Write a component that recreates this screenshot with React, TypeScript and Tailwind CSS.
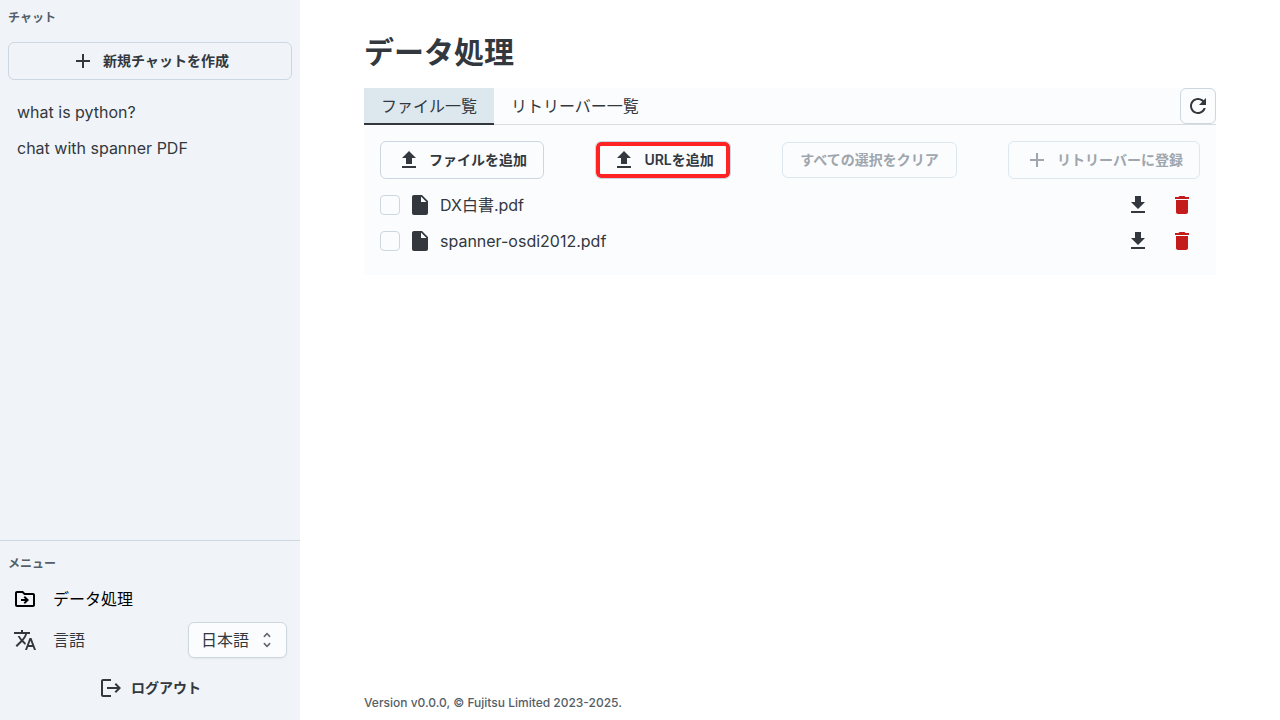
import React from "react";
import clsx from "clsx";

const ICONS = {
  add: "M19 13h-6v6h-2v-6H5v-2h6V5h2v6h6z",
  upload: "M5 20h14v-2H5zm0-10h4v6h6v-6h4l-7-7z",
  download: "M19 9h-4V3H9v6H5l7 7zM5 18v2h14v-2z",
  file: "M6 2c-1.1 0-1.99.9-1.99 2L4 20c0 1.1.89 2 1.99 2H18c1.1 0 2-.9 2-2V8l-6-6zm7 7V3.5L18.5 9z",
  trash: "M6 19c0 1.1.9 2 2 2h8c1.1 0 2-.9 2-2V7H6zM19 4h-3.5l-1-1h-5l-1 1H5v2h14z",
  refresh:
    "M17.65 6.35C16.2 4.9 14.21 4 12 4c-4.42 0-7.99 3.58-7.99 8s3.57 8 7.99 8c3.73 0 6.84-2.55 7.73-6h-2.08c-.82 2.33-3.04 4-5.65 4-3.31 0-6-2.69-6-6s2.69-6 6-6c1.66 0 3.14.69 4.22 1.78L13 11h7V4z",
  folderMove:
    "M20 6h-8l-2-2H4c-1.1 0-1.99.9-1.99 2L2 18c0 1.1.9 2 2 2h16c1.1 0 2-.9 2-2V8c0-1.1-.9-2-2-2m0 12H4V6h5.17l2 2H20zm-7.84-6H8v2h4.16l-1.59 1.59L11.99 17 16 13.01 11.99 9l-1.41 1.41z",
  translate:
    "m12.87 15.07-2.54-2.51.03-.03c1.74-1.94 2.98-4.17 3.71-6.53H17V4h-7V2H8v2H1v1.99h11.17C11.5 7.92 10.44 9.75 9 11.35 8.07 10.32 7.3 9.19 6.69 8h-2c.73 1.63 1.73 3.17 2.98 4.56l-5.09 5.02L4 19l5-5 3.11 3.11zM18.5 10h-2L12 22h2l1.12-3h4.75L21 22h2zm-2.62 7 1.62-4.33L19.12 17z",
  logout:
    "m17 7-1.41 1.41L18.17 11H8v2h10.17l-2.58 2.58L17 17l5-5zM4 5h8V3H4c-1.1 0-2 .9-2 2v14c0 1.1.9 2 2 2h8v-2H4z",
  unfold:
    "m12 5.83 2.46 2.46c.39.39 1.02.39 1.41 0 .39-.39.39-1.02 0-1.41L12.7 3.7c-.39-.39-1.02-.39-1.41 0L8.12 6.88c-.39.39-.39 1.02 0 1.41.39.39 1.02.39 1.41 0zm0 12.34-2.46-2.46c-.39-.39-1.02-.39-1.41 0-.39.39-.39 1.02 0 1.41l3.17 3.18c.39.39 1.02.39 1.41 0l3.17-3.17c.39-.39.39-1.02 0-1.41-.39-.39-1.02-.39-1.41 0z",
};

interface IconProps {
  name: keyof typeof ICONS;
  className?: string;
}

function Icon({ name, className = "size-6" }: IconProps) {
  return (
    <svg viewBox="0 0 24 24" fill="currentColor" aria-hidden="true" className={clsx("shrink-0", className)}>
      <path d={ICONS[name]} />
    </svg>
  );
}

interface ActionButtonProps {
  icon?: keyof typeof ICONS;
  children: React.ReactNode;
  disabled?: boolean;
  className?: string;
}

function ActionButton({ icon, children, disabled, className }: ActionButtonProps) {
  return (
    <button
      type="button"
      disabled={disabled}
      className={clsx(
        "flex items-center justify-center gap-2 rounded-md border text-sm font-semibold whitespace-nowrap",
        icon ? "h-[38px] px-4" : "h-9 px-[17px]",
        disabled ? "border-[#dde7ee] text-[#9fa6ad]" : "border-[#cdd7e1] text-[#32383e]",
        className
      )}
    >
      {icon && <Icon name={icon} />}
      {children}
    </button>
  );
}

const chats = ["what is python?", "chat with spanner PDF"];
const files = ["DX白書.pdf", "spanner-osdi2012.pdf"];

function Sidebar() {
  return (
    <aside className="flex w-[300px] shrink-0 flex-col bg-[#f0f4f8] text-[#32383e]">
      <section className="grow px-2 pt-2">
        <h2 className="text-xs leading-5 font-semibold text-[#555e68]">チャット</h2>
        <ActionButton icon="add" className="mt-[14px] w-full">
          新規チャットを作成
        </ActionButton>
        <ul className="mt-[14px]">
          {chats.map((chat) => (
            <li key={chat}>
              <a href="#" className="flex h-9 items-center px-[9px] text-base">
                {chat}
              </a>
            </li>
          ))}
        </ul>
      </section>

      <section className="border-t border-[#cdd7e1] pt-[13px] pb-[14px]">
        <h2 className="px-2 text-xs leading-5 font-semibold text-[#555e68]">メニュー</h2>
        <nav className="mt-[7px] px-[13px]">
          <a href="#" className="flex h-9 items-center gap-4 text-black">
            <Icon name="folderMove" />
            データ処理
          </a>
          <div className="mt-[5px] flex items-center gap-4">
            <Icon name="translate" />
            <label htmlFor="language" className="grow">
              言語
            </label>
            <div className="relative">
              <select
                id="language"
                className="h-9 w-[99px] appearance-none rounded-md border border-[#cdd7e1] bg-[#fbfcfe] px-3 shadow-xs"
              >
                <option>日本語</option>
              </select>
              <Icon
                name="unfold"
                className="pointer-events-none absolute top-2 right-[10px] size-5 text-[#636b74]"
              />
            </div>
          </div>
        </nav>
        <button type="button" className="mt-3 flex h-9 w-full items-center justify-center gap-2 text-sm font-semibold">
          <Icon name="logout" />
          ログアウト
        </button>
      </section>
    </aside>
  );
}

function FileRow({ name }: { name: string }) {
  return (
    <li className="flex h-9 items-center gap-2">
      <label className="flex grow items-center gap-2">
        <input
          type="checkbox"
          className="size-5 appearance-none rounded-sm border border-[#cdd7e1] bg-[#fbfcfe] checked:bg-[#0b6bcb]"
        />
        <Icon name="file" />
        {name}
      </label>
      <button type="button" aria-label="ダウンロード" className="flex size-9 items-center justify-center">
        <Icon name="download" />
      </button>
      <button type="button" aria-label="削除" className="flex size-9 items-center justify-center text-[#c41c1c]">
        <Icon name="trash" />
      </button>
    </li>
  );
}

export default function App() {
  return (
    <div className="flex min-h-screen bg-white font-['Inter','Noto_Sans_CJK_JP',sans-serif] text-base text-[#32383e]">
      <Sidebar />
      <div className="flex grow flex-col px-16 pt-8">
        <main className="grow">
          <h1 className="text-3xl leading-10 font-bold">データ処理</h1>

          <div className="mt-4 bg-[#fbfcfe]">
            <div className="flex h-[37px] border-b border-[#d8dde2]" role="tablist">
              <button
                type="button"
                role="tab"
                aria-selected="true"
                className="h-[37px] border-b-2 border-[#32383e] bg-[#dde7ee] px-[17px]"
              >
                ファイル一覧
              </button>
              <button type="button" role="tab" aria-selected="false" className="px-[17px]">
                リトリーバー一覧
              </button>
              <button
                type="button"
                aria-label="更新"
                className="ml-auto flex size-9 items-center justify-center rounded-md border border-[#cdd7e1]"
              >
                <Icon name="refresh" />
              </button>
            </div>

            <div className="p-4" role="tabpanel">
              <div className="flex items-center justify-between">
                <ActionButton icon="upload">ファイルを追加</ActionButton>
                {/* highlighted entry point for adding by URL */}
                <ActionButton icon="upload" className="ring-4 ring-[#ff2323] ring-inset">
                  URLを追加
                </ActionButton>
                <ActionButton disabled>すべての選択をクリア</ActionButton>
                <ActionButton icon="add" disabled>
                  リトリーバーに登録
                </ActionButton>
              </div>
              <ul className="mt-2">
                {files.map((file) => (
                  <FileRow key={file} name={file} />
                ))}
              </ul>
            </div>
          </div>
        </main>
        <footer className="pb-2 text-xs leading-[18px] font-medium text-[#555e68]">
          Version v0.0.0, © Fujitsu Limited 2023-2025.
        </footer>
      </div>
    </div>
  );
}
